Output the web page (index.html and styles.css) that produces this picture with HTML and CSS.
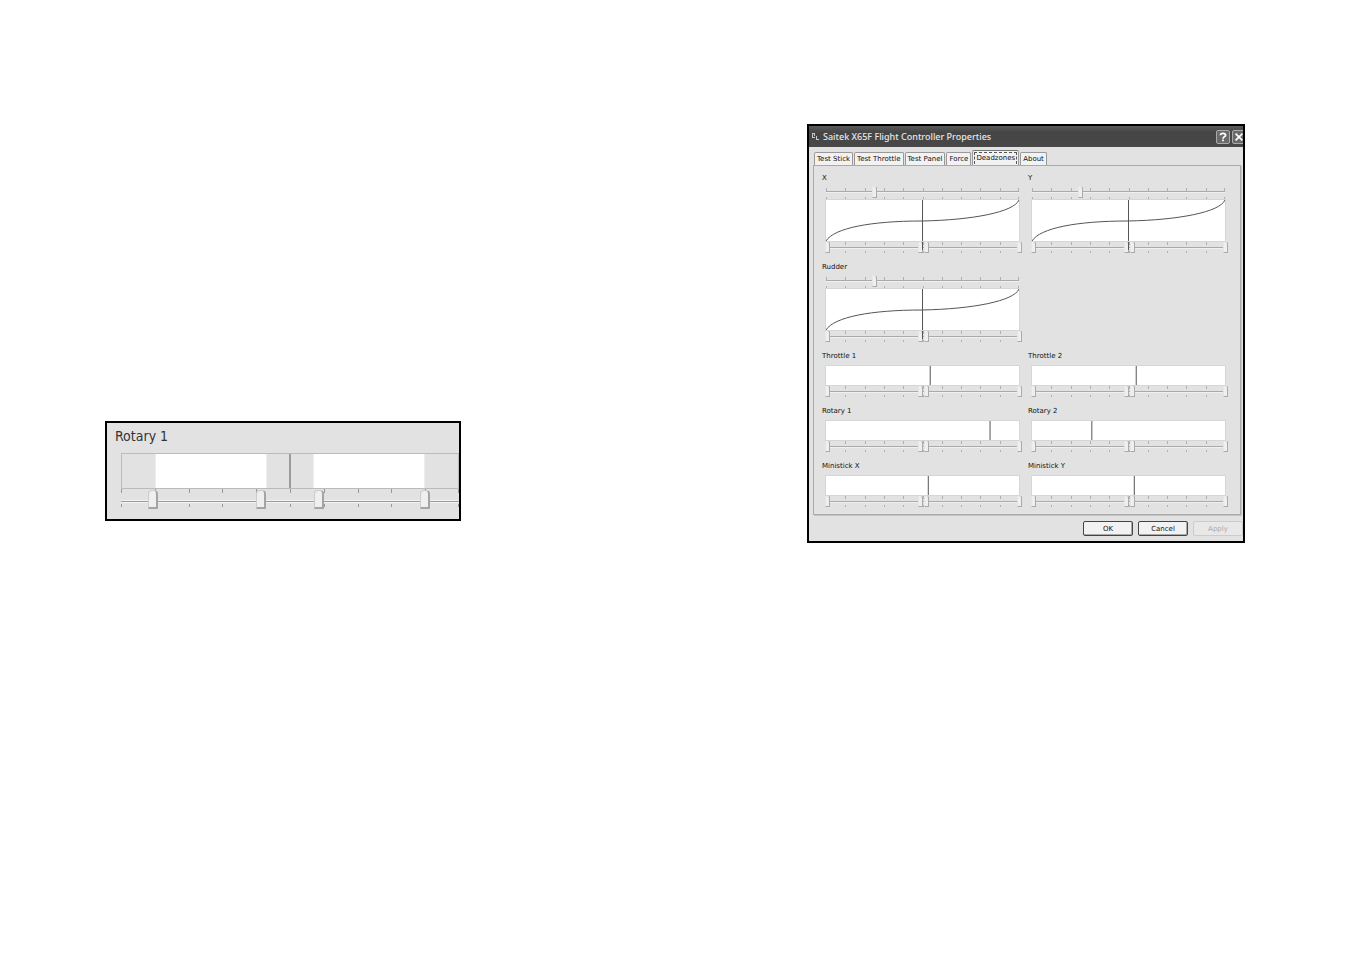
FILE: index.html
```html
<!DOCTYPE html>
<html lang="en">
<head>
    <meta charset="UTF-8">
    <meta name="viewport" content="width=device-width, initial-scale=1.0">
    <title>Saitek X65F Flight Controller Properties</title>
    <link rel="stylesheet" href="styles.css">
</head>
<body>
    <main class="page">
        <!-- Close-up of one axis -->
        <section class="frame detail">
            <h2 class="detail-title">Rotary 1</h2>
            <div class="detail-axis">
                <svg class="detail-plot">
                    <rect class="zone" x="10%" y="0" width="33%" height="100%"/>
                    <rect class="zone" x="57%" y="0" width="33%" height="100%"/>
                    <line class="marker" x1="50%" y1="0" x2="50%" y2="100%"/>
                </svg>
                <div class="slider big">
                    <input type="range" step="any" value="9.5" aria-label="Rotary 1 start">
                    <input type="range" step="any" value="41.5" aria-label="Rotary 1 centre left">
                    <input type="range" step="any" value="58.5" aria-label="Rotary 1 centre right">
                    <input type="range" step="any" value="90" aria-label="Rotary 1 end">
                </div>
            </div>
        </section>

        <!-- Properties dialog -->
        <section class="frame dialog">
            <header class="titlebar">
                <svg class="app-icon" viewBox="0 0 9 9">
                    <path d="M1.500 1v5M3.500 1v3M1 1.500h3M1 5.500h3M5.500 4v3M5 7.500h3" fill="none" stroke="#c8c8c8"/>
                </svg>
                <h1>Saitek X65F Flight Controller Properties</h1>
                <button class="title-btn" aria-label="Help">
                    <svg viewBox="0 0 14 14"><path d="M4 5c0-3 6-3 6 0c0 2-3 1.500-3 4M7 10v2"/></svg>
                </button>
                <button class="title-btn" aria-label="Close">
                    <svg viewBox="0 0 14 14"><path d="M3 3l8 8M11 3l-8 8"/></svg>
                </button>
            </header>
            <div class="tabs" role="tablist">
                <button class="tab" role="tab">Test Stick</button>
                <button class="tab" role="tab">Test Throttle</button>
                <button class="tab" role="tab">Test Panel</button>
                <button class="tab" role="tab">Force</button>
                <button class="tab active" role="tab" aria-selected="true"><span>Deadzones</span></button>
                <button class="tab" role="tab">About</button>
            </div>
            <div class="panel" role="tabpanel">
                <div class="axis curved">
                    <h3>X</h3>
                    <div class="slider single">
                        <input type="range" value="25" aria-label="X curve">
                    </div>
                    <svg class="plot" viewBox="0 0 193 41" preserveAspectRatio="none">
                        <path class="curve" d="M0 41C8 28 45 21 96 21C147 20 188 12 193 0"/>
                        <path class="marker" d="M96.500 0v50"/>
                    </svg>
                    <div class="slider">
                        <input type="range" value="1" aria-label="X start">
                        <input type="range" value="49" aria-label="X centre left">
                        <input type="range" value="52" aria-label="X centre right">
                        <input type="range" value="100" aria-label="X end">
                    </div>
                </div>
                <div class="axis curved">
                    <h3>Y</h3>
                    <div class="slider single">
                        <input type="range" value="25" aria-label="Y curve">
                    </div>
                    <svg class="plot" viewBox="0 0 193 41" preserveAspectRatio="none">
                        <path class="curve" d="M0 41C8 28 45 21 96 21C147 20 188 12 193 0"/>
                        <path class="marker" d="M96.500 0v50"/>
                    </svg>
                    <div class="slider">
                        <input type="range" value="1" aria-label="Y start">
                        <input type="range" value="49" aria-label="Y centre left">
                        <input type="range" value="52" aria-label="Y centre right">
                        <input type="range" value="100" aria-label="Y end">
                    </div>
                </div>
                <div class="axis curved first">
                    <h3>Rudder</h3>
                    <div class="slider single">
                        <input type="range" value="25" aria-label="Rudder curve">
                    </div>
                    <svg class="plot" viewBox="0 0 193 41" preserveAspectRatio="none">
                        <path class="curve" d="M0 41C8 28 45 21 96 21C147 20 188 12 193 0"/>
                        <path class="marker" d="M96.500 0v50"/>
                    </svg>
                    <div class="slider">
                        <input type="range" value="1" aria-label="Rudder start">
                        <input type="range" value="49" aria-label="Rudder centre left">
                        <input type="range" value="52" aria-label="Rudder centre right">
                        <input type="range" value="100" aria-label="Rudder end">
                    </div>
                </div>
                <div class="axis first">
                    <h3>Throttle 1</h3>
                    <svg class="plot"><line class="marker" x1="54%" y1="0" x2="54%" y2="100%"/></svg>
                    <div class="slider">
                        <input type="range" value="1" aria-label="Throttle 1 start">
                        <input type="range" value="49" aria-label="Throttle 1 centre left">
                        <input type="range" value="52" aria-label="Throttle 1 centre right">
                        <input type="range" value="100" aria-label="Throttle 1 end">
                    </div>
                </div>
                <div class="axis">
                    <h3>Throttle 2</h3>
                    <svg class="plot"><line class="marker" x1="54%" y1="0" x2="54%" y2="100%"/></svg>
                    <div class="slider">
                        <input type="range" value="1" aria-label="Throttle 2 start">
                        <input type="range" value="49" aria-label="Throttle 2 centre left">
                        <input type="range" value="52" aria-label="Throttle 2 centre right">
                        <input type="range" value="100" aria-label="Throttle 2 end">
                    </div>
                </div>
                <div class="axis">
                    <h3>Rotary 1</h3>
                    <svg class="plot"><line class="marker" x1="85%" y1="0" x2="85%" y2="100%"/></svg>
                    <div class="slider">
                        <input type="range" value="1" aria-label="Rotary 1 start">
                        <input type="range" value="49" aria-label="Rotary 1 centre left">
                        <input type="range" value="52" aria-label="Rotary 1 centre right">
                        <input type="range" value="100" aria-label="Rotary 1 end">
                    </div>
                </div>
                <div class="axis">
                    <h3>Rotary 2</h3>
                    <svg class="plot"><line class="marker" x1="31%" y1="0" x2="31%" y2="100%"/></svg>
                    <div class="slider">
                        <input type="range" value="1" aria-label="Rotary 2 start">
                        <input type="range" value="49" aria-label="Rotary 2 centre left">
                        <input type="range" value="52" aria-label="Rotary 2 centre right">
                        <input type="range" value="100" aria-label="Rotary 2 end">
                    </div>
                </div>
                <div class="axis">
                    <h3>Ministick X</h3>
                    <svg class="plot"><line class="marker" x1="53%" y1="0" x2="53%" y2="100%"/></svg>
                    <div class="slider">
                        <input type="range" value="1" aria-label="Ministick X start">
                        <input type="range" value="49" aria-label="Ministick X centre left">
                        <input type="range" value="52" aria-label="Ministick X centre right">
                        <input type="range" value="100" aria-label="Ministick X end">
                    </div>
                </div>
                <div class="axis">
                    <h3>Ministick Y</h3>
                    <svg class="plot"><line class="marker" x1="53%" y1="0" x2="53%" y2="100%"/></svg>
                    <div class="slider">
                        <input type="range" value="1" aria-label="Ministick Y start">
                        <input type="range" value="49" aria-label="Ministick Y centre left">
                        <input type="range" value="52" aria-label="Ministick Y centre right">
                        <input type="range" value="100" aria-label="Ministick Y end">
                    </div>
                </div>
            </div>
            <footer class="actions">
                <button class="btn">OK</button>
                <button class="btn">Cancel</button>
                <button class="btn" disabled>Apply</button>
            </footer>
        </section>
    </main>
</body>
</html>
```
FILE: styles.css
```css
* {
    margin: 0;
    padding: 0;
    box-sizing: border-box;
}
body {
    font-family: "DejaVu Sans", sans-serif;
    font-size: 7px;
    background-color: #fff;
    color: #111;
}
h1, h2, h3 {
    font-weight: normal;
}
button {
    font: inherit;
    color: inherit;
}
.page {
    display: grid;
    grid-template-columns: 356fr 346fr 438fr;
    padding: 124px 106px 0 105px;
}
.frame {
    background-color: #e2e2e2;
    border: 2px solid #000;
    overflow: hidden;
}
/* Close-up */
.detail {
    align-self: end;
    margin-bottom: 22px;
    padding: 5px 0 10px 8px;
}
.detail-title {
    font-family: "DejaVu Sans Condensed", "DejaVu Sans", sans-serif;
    font-size: 14px;
    line-height: 16px;
    color: #333;
}
.detail-axis {
    margin: 9px 0 0 6px;
}
.detail-plot {
    display: block;
    width: 100%;
    height: 36px;
    border: 1px solid #bbb;
    overflow: visible;
}
.zone {
    fill: #fff;
}
.marker {
    stroke: #555;
    stroke-width: 1px;
    fill: none;
    vector-effect: non-scaling-stroke;
}
/* Dialog */
.dialog {
    grid-column: 3;
}
.titlebar {
    display: flex;
    align-items: center;
    gap: 2px;
    height: 21px;
    padding-left: 2px;
    background: linear-gradient(#5a5a5a, #454545 30%, #484848);
    color: #e6e6e6;
}
.titlebar h1 {
    flex: 1;
    padding-left: 1px;
    font-family: "Noto Sans", sans-serif;
    font-size: 9px;
    font-weight: 500;
    line-height: 12px;
    white-space: nowrap;
}
.app-icon {
    width: 9px;
    height: 9px;
}
.title-btn {
    flex: none;
    width: 14px;
    height: 14px;
    border: 1px solid #aaa;
    border-radius: 2px;
    background-color: #6a6a6a;
}
.title-btn:last-child {
    margin-right: -3px;
}
.title-btn svg {
    display: block;
    width: 12px;
    height: 12px;
    fill: none;
    stroke: #fff;
    stroke-width: 2;
}
.tabs {
    display: flex;
    align-items: flex-end;
    gap: 1px;
    height: 18px;
    padding-left: 5px;
}
.tab {
    height: 13px;
    padding: 0 2px;
    border: 1px solid #999;
    border-bottom: none;
    border-radius: 2px 2px 0 0;
    background-color: #f2f2f2;
    line-height: 11px;
    white-space: nowrap;
}
.tab.active {
    height: 15px;
    padding: 0 1px;
    border-top-color: #777;
}
.tab.active span {
    display: block;
    height: 12px;
    padding: 0 1px;
    border: 1px dashed #555;
    border-bottom: none;
}
.panel {
    display: grid;
    grid-template-columns: 1fr 1fr;
    gap: 6px 9px;
    margin: 0 2px 0 4px;
    padding: 6px 15px 5px 8px;
    border: 1px solid #aaa;
    box-shadow: 1px 1px 0 #c4c4c4;
}
.first {
    grid-column: 1;
}
.axis h3 {
    margin-bottom: 4px;
    font-size: 7px;
    line-height: 12px;
}
.curved h3 {
    margin-bottom: 2px;
}
.axis .plot,
.axis .slider {
    margin-left: 4px;
}
.plot {
    display: block;
    position: relative;
    z-index: 1;
    width: calc(100% - 4px);
    height: 19px;
    background-color: #fff;
    outline: 1px solid #d6d6d6;
    overflow: visible;
    pointer-events: none;
}
.curved .plot {
    height: 41px;
}
.curve {
    fill: none;
    stroke: #555;
    stroke-width: 1px;
    vector-effect: non-scaling-stroke;
}
/* Sliders: tick rows and track are painted on the box, the thumbs are stacked inputs */
.slider {
    --tick: #b0b0b0;
    --thumb-w: 5px;
    --thumb-h: 12px;
    display: grid;
    height: 14px;
    background:
        linear-gradient(var(--tick), var(--tick)) 100% 1px / 1px 3px no-repeat,
        linear-gradient(var(--tick), var(--tick)) 100% 10px / 1px 2px no-repeat,
        repeating-linear-gradient(to right, var(--tick) 0 1px, transparent 1px 10%) 0 1px / 100% 3px no-repeat,
        repeating-linear-gradient(to right, var(--tick) 0 1px, transparent 1px 10%) 0 10px / 100% 2px no-repeat,
        linear-gradient(#aaa 1px, #f0f0f0 1px) 0 6px / 100% 2px no-repeat;
}
.slider.single {
    background:
        linear-gradient(var(--tick), var(--tick)) 100% 2px / 1px 3px no-repeat,
        linear-gradient(var(--tick), var(--tick)) 100% 11px / 1px 2px no-repeat,
        repeating-linear-gradient(to right, var(--tick) 0 1px, transparent 1px 10%) 0 2px / 100% 3px no-repeat,
        repeating-linear-gradient(to right, var(--tick) 0 1px, transparent 1px 10%) 0 11px / 100% 2px no-repeat,
        linear-gradient(#aaa 1px, #f0f0f0 1px) 0 5px / 100% 2px no-repeat;
}
.slider.big {
    --tick: #999;
    --thumb-w: 10px;
    --thumb-h: 19px;
    height: 20px;
    background:
        linear-gradient(var(--tick), var(--tick)) 100% 0 / 1px 4px no-repeat,
        linear-gradient(var(--tick), var(--tick)) 100% 15px / 1px 3px no-repeat,
        repeating-linear-gradient(to right, var(--tick) 0 1px, transparent 1px 10%) 0 0 / 100% 4px no-repeat,
        repeating-linear-gradient(to right, var(--tick) 0 1px, transparent 1px 10%) 0 15px / 100% 3px no-repeat,
        linear-gradient(#f4f4f4 1px, #999 1px 2px, #f4f4f4 2px) 0 11px / 100% 3px no-repeat;
}
.slider input {
    grid-area: 1 / 1;
    appearance: none;
    -webkit-appearance: none;
    width: calc(100% + 6px);
    height: 12px;
    margin: 0 -3px;
    background: transparent;
    pointer-events: none;
}
.slider.big input {
    width: calc(100% + 10px);
    height: 20px;
    margin: 0 -5px;
}
.slider input::-webkit-slider-thumb {
    -webkit-appearance: none;
    width: var(--thumb-w);
    height: var(--thumb-h);
    border: 1px solid #e6e6e6;
    border-right-color: #aaa;
    border-bottom-color: #aaa;
    border-radius: 1px 3px 0 0;
    background-color: #efefef;
    pointer-events: auto;
}
.slider.big input::-webkit-slider-thumb {
    border: 1px solid #ccc;
    border-right: 2px solid #a4a4a4;
    border-bottom: 2px solid #a4a4a4;
    border-radius: 4px 4px 1px 1px;
}
/* Buttons */
.actions {
    display: flex;
    justify-content: flex-end;
    gap: 5px;
    padding: 6px 0 5px;
}
.btn {
    width: 50px;
    height: 15px;
    border: 1px solid #444;
    border-radius: 2px;
    background-color: #f2f2f2;
    box-shadow: inset -1px -1px 0 #aaa;
    line-height: 12px;
}
.btn:disabled {
    border-color: #ccc;
    background-color: #e8e8e8;
    box-shadow: none;
    color: #aaa;
}
```
